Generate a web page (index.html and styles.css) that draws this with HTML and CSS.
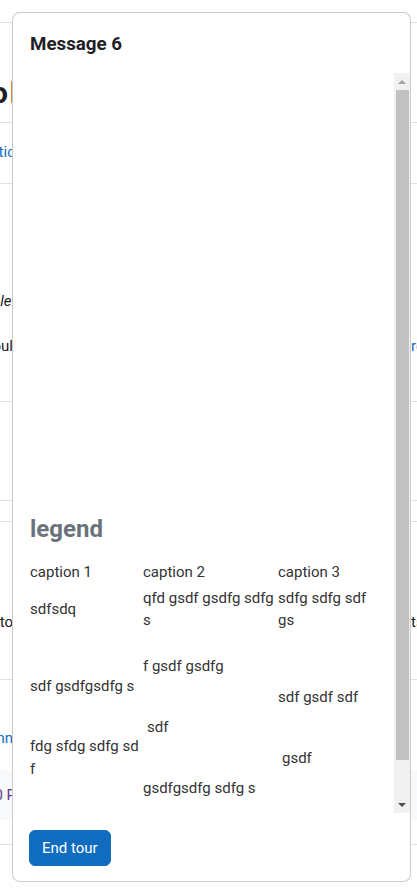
FILE: index.html
```html
<!DOCTYPE html>
<html lang="en">
<head>
    <meta charset="UTF-8">
    <meta name="viewport" content="width=device-width, initial-scale=1.0">
    <title>User tour - Message 6</title>
    <link rel="stylesheet" href="styles.css">
</head>
<body>
    <div class="page">
        <div class="row row-a"></div>
        <div class="row row-b">
            <span class="edge-l edge-top"><span class="page-title">Tour demo</span><span class="target-mark"></span></span>
        </div>
        <div class="row row-c">
            <span class="edge-l wide"><a class="link">Practic</a></span>
        </div>
        <div class="row row-d">
            <div class="line">
                <span class="edge-l wide"><em>Example:</em></span>
            </div>
            <div class="line line-gap">
                <span class="edge-l">You shoul</span>
                <span class="edge-r"><a class="link">resources</a></span>
            </div>
        </div>
        <div class="row row-e"></div>
        <div class="row row-f"></div>
        <div class="row row-g">
            <div class="line">
                <span class="edge-l">Go to</span>
                <span class="edge-r">tsdfg</span>
            </div>
        </div>
        <div class="row row-h">
            <div class="line">
                <span class="edge-l"><a class="link">Conn</a></span>
            </div>
        </div>
        <div class="row row-note">
            <div class="line">
                <span class="edge-l wider"><a class="visited">10 P</a></span>
            </div>
        </div>
        <div class="row row-i"></div>
    </div>

    <div class="tour-step" role="dialog">
        <div class="tour-header">
            <h5 class="tour-title">Message 6</h5>
        </div>
        <div class="tour-body">
            <div class="tour-scroll">
                <div class="tour-media"></div>
                <fieldset class="demo-set">
                    <legend>legend</legend>
                    <table class="demo-table">
                        <colgroup>
                            <col class="c1">
                            <col class="c2">
                            <col class="c3">
                        </colgroup>
                        <thead>
                            <tr>
                                <th>caption 1</th>
                                <th>caption 2</th>
                                <th>caption 3</th>
                            </tr>
                        </thead>
                        <tbody>
                            <tr class="r1">
                                <td class="mid">sdfsdq</td>
                                <td class="top">qfd gsdf gsdfg sdfg s</td>
                                <td class="top">sdfg sdfg sdf gs</td>
                            </tr>
                            <tr class="r2">
                                <td class="mid pad-mid">sdf gsdfgsdfg s</td>
                                <td class="top pad-top">f gsdf gsdfg</td>
                                <td class="bot pad-bot">sdf gsdf sdf</td>
                            </tr>
                            <tr class="r3">
                                <td class="mid">fdg sfdg sdfg sd f</td>
                                <td class="top">
                                    <p class="indent">sdf</p>
                                    <p class="spaced">gsdfgsdfg sdfg s</p>
                                </td>
                                <td class="mid"><span class="indent">gsdf</span></td>
                            </tr>
                        </tbody>
                    </table>
                </fieldset>
            </div>
            <div class="scrollbar">
                <span class="sb-btn sb-up"></span>
                <div class="sb-track">
                    <div class="sb-thumb"></div>
                </div>
                <span class="sb-btn sb-down"></span>
            </div>
        </div>
        <div class="tour-footer">
            <button type="button" class="btn-end">End tour</button>
        </div>
    </div>
</body>
</html>
```

FILE: styles.css
```css
* {
    box-sizing: border-box;
}

body {
    margin: 0;
    background: #fff;
    color: #1d2125;
    font-family: "Segoe UI", Roboto, "Helvetica Neue", Arial, "Noto Sans", "Liberation Sans", sans-serif;
    font-size: 15px;
    line-height: 22.5px;
}

/* page behind the tour */
.page {
    width: 100%;
}

.row {
    border-bottom: 1px solid #dee2e6;
}

.row-a { height: 23px; }
.row-b { height: 100px; padding-top: 52px; display: flex; }
.row-c { height: 61px; padding-top: 18px; display: flex; }
.row-d { height: 218px; padding-top: 106px; }
.row-e { height: 99px; }
.row-f { height: 21px; }
.row-g { height: 158px; padding-top: 89px; }
.row-h { height: 90px; padding-top: 47px; border-bottom: none; }
.row-note { height: 50px; padding-top: 14px; background: #f8f9fa; border-bottom: none; }
.row-i { height: 25px; }

.line {
    display: flex;
    height: 22.5px;
}

.line-gap {
    margin-top: 22.5px;
}

.edge-l {
    width: 13px;
    flex: none;
    display: flex;
    justify-content: flex-end;
    align-items: center;
    overflow: hidden;
    white-space: nowrap;
}

.edge-l.wide { width: 15px; height: 22.5px; }
.edge-l.wider { width: 16px; }
.edge-l.edge-top { align-items: flex-start; height: 36px; }

.edge-r {
    width: 6px;
    margin-left: auto;
    overflow: hidden;
    white-space: nowrap;
}

.page-title {
    font-size: 30px;
    line-height: 36px;
    font-weight: 700;
}

.target-mark {
    flex: none;
    width: 2px;
    height: 22px;
    margin: 6px 0 0 3px;
    background: #d7862e;
}

.link {
    color: #0f6cbf;
}

.visited {
    color: #5f3d8c;
}

/* tour step */
.tour-step {
    position: absolute;
    top: 12px;
    left: 12px;
    width: 399px;
    height: 870px;
    background: #fff;
    border: 1px solid rgba(0,0,0,0.2);
    border-radius: 8px;
    display: flex;
    flex-direction: column;
}

.tour-header {
    padding: 20px 17px 17.5px;
}

.tour-title {
    margin: 0;
    font-size: 18.75px;
    line-height: 22.5px;
    font-weight: 700;
    color: #1d2125;
}

.tour-body {
    height: 740px;
    flex: none;
    display: flex;
    color: #333;
}

.tour-scroll {
    flex: 1;
    overflow: hidden;
    padding: 0 17px;
}

.scrollbar {
    width: 16px;
    flex: none;
    background: #f1f1f1;
    display: flex;
    flex-direction: column;
}

.sb-btn {
    height: 17px;
    flex: none;
    display: flex;
    align-items: center;
    justify-content: center;
}

.sb-btn::before {
    content: "";
    border-left: 4px solid transparent;
    border-right: 4px solid transparent;
}

.sb-up::before {
    border-bottom: 4px solid #a3a3a3;
}

.sb-down::before {
    border-top: 4px solid #505050;
}

.sb-track {
    flex: 1;
}

.sb-thumb {
    height: 670px;
    margin: 0 1px 0 2px;
    background: #c1c1c1;
}

.tour-media {
    height: 442px;
}

.demo-set {
    margin: 0 0 54px;
    padding: 0;
    border: none;
    min-width: 0;
}

.demo-set legend {
    padding: 0;
    margin-bottom: 17.7px;
    font-size: 24px;
    line-height: 28.8px;
    font-weight: 700;
    color: #6a737b;
}

.demo-table {
    table-layout: fixed;
    width: 346px;
    border-collapse: collapse;
}

.c1 { width: 113px; }
.c2 { width: 135px; }
.c3 { width: 98px; }

.demo-table th,
.demo-table td {
    padding: 0;
    text-align: left;
    font-weight: 400;
}

.demo-table .top { vertical-align: top; }
.demo-table .mid { vertical-align: middle; }
.demo-table .bot { vertical-align: bottom; }

.r1 td { padding-top: 3px; }
.r2 { height: 84px; }
.demo-table .pad-mid { padding-top: 24px; }
.demo-table .pad-top { padding-top: 23.5px; }
.demo-table .pad-bot { padding-bottom: 7.75px; }

.demo-table p {
    margin: 0;
}

.demo-table .spaced {
    margin-top: 39px;
}

.indent {
    padding-left: 4px;
}

.tour-footer {
    padding: 17px 16px 15px;
}

.btn-end {
    background: #0f6cbf;
    border: 1px solid #0f6cbf;
    color: #fff;
    font-family: inherit;
    font-size: 15px;
    line-height: 22px;
    padding: 6px 12px;
    border-radius: 6px;
    cursor: pointer;
}
```
